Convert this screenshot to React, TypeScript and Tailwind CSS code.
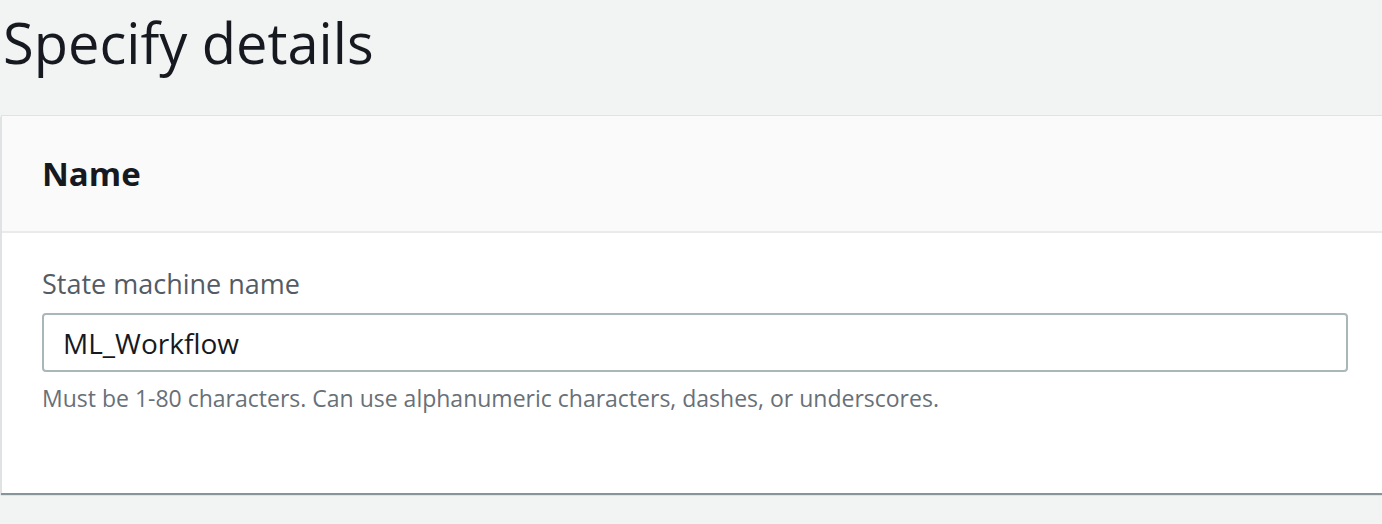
export default function App() {
    return (
        <main
            className="h-[524px] w-full overflow-hidden bg-[#f2f3f3] text-[#16191f]"
            style={{ fontFamily: '"Open Sans", "Noto Sans", sans-serif' }}
        >
            {/* 페이지 제목 */}
            <h1 className="h-[115px] pl-[3px] pt-[6px] text-[56px] leading-[72px] font-normal">
                Specify details
            </h1>

            <section className="ml-[1px] w-[1420px] border-t border-l border-[#dfe3e3] bg-white shadow-[0_2px_1px_0_#87949a]">
                <header className="flex h-[117px] items-center border-b-2 border-[#e9ebeb] bg-[#fafafa] pl-[40px]">
                    <h2 className="text-[33px] leading-none font-bold">Name</h2>
                </header>

                <div className="h-[260px] pl-[40px] pt-[34px]">
                    <label className="block text-[27px] leading-[34px] text-[#545b64]">
                        State machine name
                    </label>
                    <div className="mt-[12px] flex h-[59px] w-[1306px] items-center rounded-[4px] border-2 border-[#aab7b8] bg-white px-[19px]">
                        <span className="text-[28px] text-[#16191f]">ML_Workflow</span>
                    </div>
                    <p className="mt-[12px] text-[23px] leading-[28px] text-[#687078]">
                        Must be 1-80 characters. Can use alphanumeric characters, dashes, or underscores.
                    </p>
                </div>
            </section>
        </main>
    );
}
